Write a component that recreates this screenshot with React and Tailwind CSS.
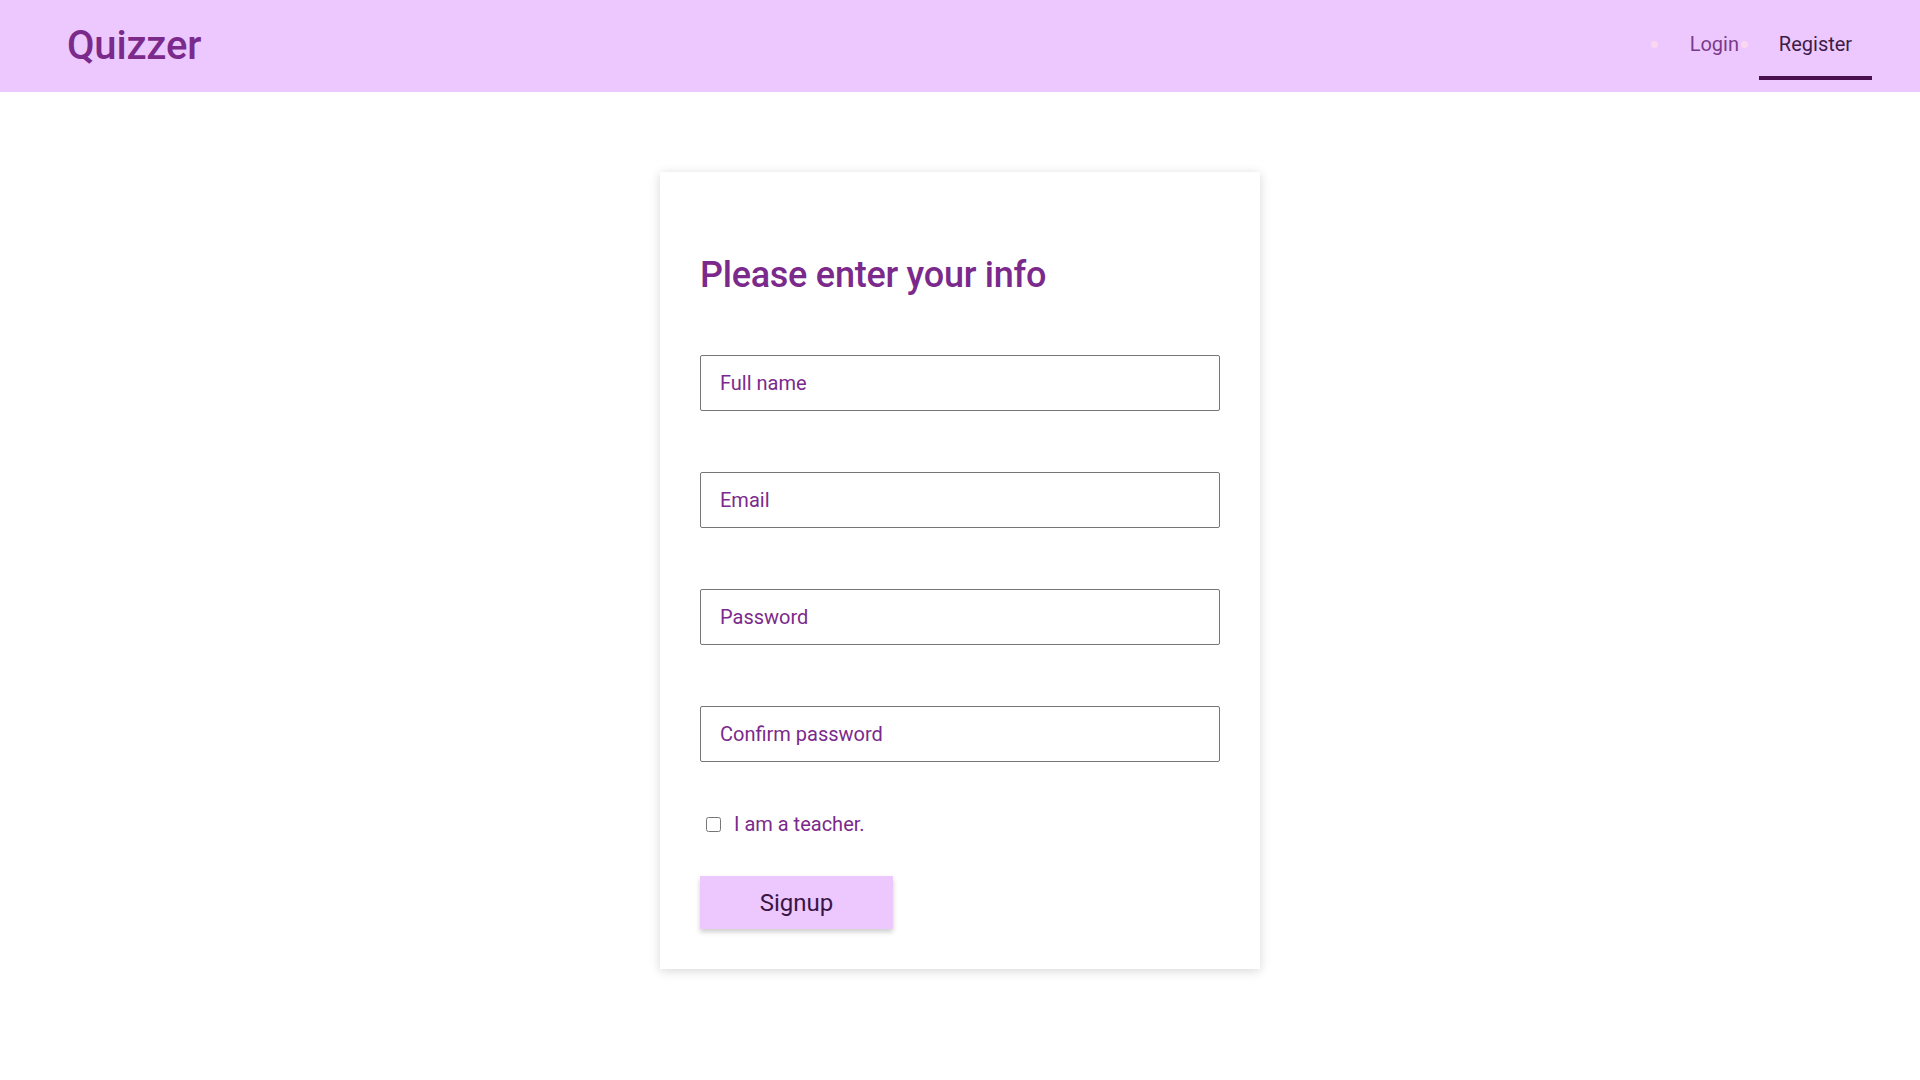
import React from "react";

export default function App() {
  return (
    <div className="min-h-screen w-full bg-white" style={{ fontFamily: "Roboto, 'Noto Sans', sans-serif" }}>
      <header className="h-[92px] bg-[#edc8fe] flex items-center justify-between pl-[67px] pr-[48px]">
        <div className="text-[40px] font-medium text-[#7b2a8c] leading-none tracking-[-0.2px]">Quizzer</div>
        <nav className="relative flex items-center">
          <a className="h-[68px] px-[20px] flex items-center justify-center border-b-4 border-transparent text-[20px] text-[#7a3a8a]">Login</a>
          <a className="h-[68px] w-[113px] flex items-center justify-center border-b-4 border-[#4a0f4e] text-[20px] text-[#3d1b48]">Register</a>
          <span className="absolute left-[-19px] top-[29px] w-[7px] h-[7px] rounded-full bg-[#fbd6ef]"></span>
          <span className="absolute left-[71px] top-[29px] w-[7px] h-[7px] rounded-full bg-[#fbd6ef]"></span>
        </nav>
      </header>
      <main className="flex justify-center pt-[80px]">
        <div className="w-[600px] bg-white shadow-[0_2px_10px_rgba(0,0,0,0.16)] px-[40px] pt-[82px] pb-[40px]">
          <h1 className="text-[36px] leading-[42px] font-medium text-[#7b2a8c] tracking-[-0.25px]">Please enter your info</h1>
          <div className="mt-[59px] flex flex-col gap-[61px]">
            {["Full name", "Email", "Password", "Confirm password"].map((p) => (
              <input
                key={p}
                type={p.toLowerCase().includes("password") ? "password" : "text"}
                placeholder={p}
                className="h-[56px] w-full border border-[#767676] rounded-[2px] pl-[19px] text-[20px] text-[#7b2a8c] placeholder:text-[#7b2a8c] outline-none"
              />
            ))}
          </div>
          <label className="mt-[51px] flex items-center text-[20px] leading-[23px] text-[#7b2a8c]">
            <input type="checkbox" className="ml-[6px] mr-[13px] w-[15px] h-[15px]" />
            <span>I am a teacher.</span>
          </label>
          <button className="mt-[40px] w-[193px] h-[53px] bg-[#edc8fe] text-[24px] text-[#3a1545] shadow-[0_3px_5px_rgba(0,0,0,0.2)]">
            Signup
          </button>
        </div>
      </main>
    </div>
  );
}
